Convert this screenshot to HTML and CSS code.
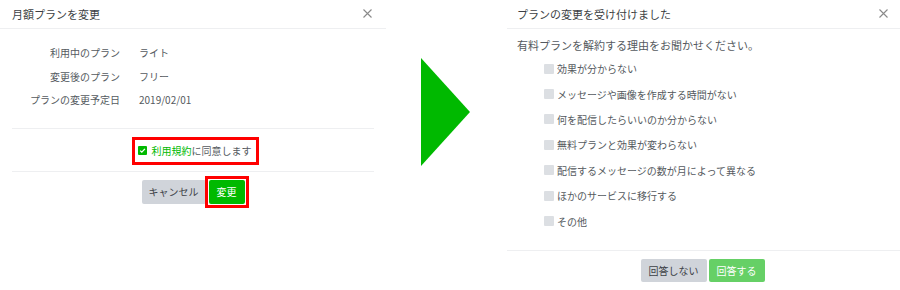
FILE: index.html
```html
<!DOCTYPE html>
<html lang="ja">
<head>
    <meta charset="UTF-8">
    <title>プラン変更</title>
    <link rel="stylesheet" href="styles.css">
</head>
<body>
    <div class="page">
        <div class="dialog dialog-change">
            <div class="dialog-header">
                <span class="dialog-title">月額プランを変更</span>
                <svg class="close" viewBox="0 0 9 9" width="9" height="9">
                    <path d="M0.5 0.5L8.5 8.5M8.5 0.5L0.5 8.5" stroke="#8a8a8a" stroke-width="1.1" fill="none"/>
                </svg>
            </div>
            <div class="plan-info">
                <div class="plan-label">利用中のプラン</div>
                <div class="plan-value">ライト</div>
                <div class="plan-label">変更後のプラン</div>
                <div class="plan-value">フリー</div>
                <div class="plan-label">プランの変更予定日</div>
                <div class="plan-value">2019/02/01</div>
            </div>
            <div class="divider"></div>
            <div class="agree-row">
                <label class="agree highlight">
                    <span class="check checked">
                        <svg viewBox="0 0 9 9" width="9" height="9">
                            <path d="M2.2 4.6L3.8 6.1L6.9 2.9" stroke="#fff" stroke-width="1.3" fill="none"/>
                        </svg>
                    </span>
                    <span><a href="#" class="terms">利用規約</a>に同意します</span>
                </label>
            </div>
            <div class="divider"></div>
            <div class="actions">
                <button class="btn btn-gray">キャンセル</button>
                <span class="highlight highlight-btn">
                    <button class="btn btn-green">変更</button>
                </span>
            </div>
        </div>

        <div class="arrow-area">
            <div class="arrow"></div>
        </div>

        <div class="dialog dialog-survey">
            <div class="dialog-header">
                <span class="dialog-title">プランの変更を受け付けました</span>
                <svg class="close" viewBox="0 0 9 9" width="9" height="9">
                    <path d="M0.5 0.5L8.5 8.5M8.5 0.5L0.5 8.5" stroke="#8a8a8a" stroke-width="1.1" fill="none"/>
                </svg>
            </div>
            <p class="question">有料プランを解約する理由をお聞かせください。</p>
            <ul class="reasons">
                <li><span class="check"></span>効果が分からない</li>
                <li><span class="check"></span>メッセージや画像を作成する時間がない</li>
                <li><span class="check"></span>何を配信したらいいのか分からない</li>
                <li><span class="check"></span>無料プランと効果が変わらない</li>
                <li><span class="check"></span>配信するメッセージの数が月によって異なる</li>
                <li><span class="check"></span>ほかのサービスに移行する</li>
                <li><span class="check"></span>その他</li>
            </ul>
            <div class="divider divider-full"></div>
            <div class="actions actions-survey">
                <button class="btn btn-gray">回答しない</button>
                <button class="btn btn-light-green">回答する</button>
            </div>
        </div>
    </div>
</body>
</html>
```

FILE: styles.css
```css
:root {
    --line-green: #00b900;
    --light-green: #66d066;
    --text-color: #555a60;
    --title-color: #3c3f44;
    --border-color: #eeeff1;
    --gray-btn: #d0d4da;
    --check-bg: #dcdfe3;
    --red: #ff0000;
}

* {
    margin: 0;
    padding: 0;
    box-sizing: border-box;
}

body {
    font-family: "Noto Sans CJK JP", "Noto Sans", sans-serif;
    background: #fff;
    color: var(--text-color);
    font-size: 10px;
    width: 900px;
    height: 290px;
    overflow: hidden;
}

.page {
    display: flex;
    align-items: flex-start;
}

.dialog-change {
    width: 386px;
}

.dialog-survey {
    width: 395px;
}

.dialog-header {
    height: 29px;
    display: flex;
    align-items: center;
    justify-content: space-between;
    padding: 0 14px 1px 12px;
    border-bottom: 1px solid var(--border-color);
}

.dialog-survey .dialog-header {
    padding-right: 12px;
    margin-left: 2px;
    padding-left: 10px;
}

.dialog-title {
    font-size: 11px;
    color: var(--title-color);
}

.close {
    display: block;
}

.plan-info {
    display: grid;
    grid-template-columns: 120px auto;
    column-gap: 19px;
    padding-top: 12px;
    line-height: 23.5px;
}

.plan-label {
    text-align: right;
}

.divider {
    height: 1px;
    background: var(--border-color);
    margin: 16px 12px 0;
}

.agree-row {
    display: flex;
    justify-content: center;
    padding: 8px 0 6px 4px;
}

.agree-row + .divider {
    margin-top: 0;
}

.highlight {
    border: 3px solid var(--red);
}

.agree {
    display: flex;
    align-items: center;
    gap: 5px;
    height: 28px;
    padding: 0 4px 0 3px;
    font-size: 10px;
}

.terms {
    color: var(--line-green);
    text-decoration: none;
}

.check {
    display: inline-flex;
    width: 10px;
    height: 10px;
    background: var(--check-bg);
    border-radius: 1px;
    align-items: center;
    justify-content: center;
    flex-shrink: 0;
}

.check.checked {
    width: 9px;
    height: 9px;
    background: var(--line-green);
}

.check svg {
    display: block;
}

.actions {
    display: flex;
    justify-content: center;
    align-items: center;
    padding: 4px 0 0 4px;
}

.highlight-btn {
    display: inline-flex;
    padding: 1px;
    margin-left: -1px;
}

.btn {
    font-family: inherit;
    font-size: 10px;
    height: 24px;
    padding: 0 7px;
    border: none;
    border-radius: 2px;
    cursor: pointer;
}

.btn-gray {
    background: var(--gray-btn);
    color: #3d4146;
}

.btn-green {
    background: var(--line-green);
    color: #fff;
    padding: 0 8px;
}

.btn-light-green {
    background: var(--light-green);
    color: #fff;
    padding: 0 8px;
}

.arrow-area {
    width: 119px;
    padding: 58px 0 0 35px;
}

.arrow {
    width: 0;
    height: 0;
    border-left: 49px solid var(--line-green);
    border-top: 54.5px solid transparent;
    border-bottom: 54.5px solid transparent;
}

.question {
    font-size: 11px;
    line-height: 16px;
    padding: 8px 0 0 12px;
    color: var(--text-color);
}

.reasons {
    list-style: none;
    padding: 3px 0 0 39px;
}

.reasons li {
    display: flex;
    align-items: center;
    gap: 3px;
    height: 25.4px;
}

.divider-full {
    margin: 16px 0 0 2px;
}

.actions-survey {
    padding: 8px 0 0 0;
    gap: 2px;
}

.actions-survey .btn {
    height: 23px;
    padding: 0 8px;
}
```
